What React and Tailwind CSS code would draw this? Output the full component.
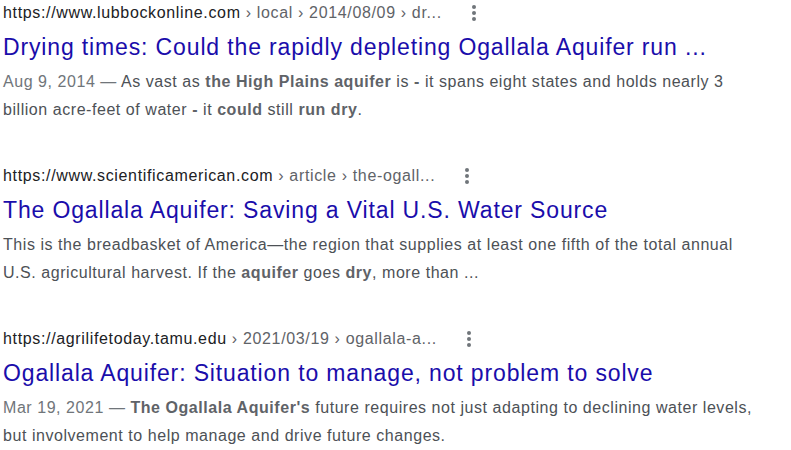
import React from "react";

function Dots() {
  return (
    <svg width="4" height="16" viewBox="0 0 4 16" className="ml-[30px] shrink-0">
      <circle cx="2" cy="2" r="2" fill="#70757a" />
      <circle cx="2" cy="8" r="2" fill="#70757a" />
      <circle cx="2" cy="14" r="2" fill="#70757a" />
    </svg>
  );
}

function Result({ host, crumbs, title, children }) {
  return (
    <div className="flex flex-col">
      <div className="flex items-center h-[23px] text-[16px] leading-[23px] tracking-[0.65px] whitespace-pre">
        <span className="text-[#202124]">{host}</span>
        <span className="text-[#5f6368]">{" " + crumbs}</span>
        <Dots />
      </div>
      <div className="mt-[8px] text-[23px] leading-[30px] tracking-[0.86px] text-[#1a0dab]">{title}</div>
      <div className="mt-[6px] text-[16px] leading-[28px] tracking-[0.55px] text-[#4d5156] w-[760px]">{children}</div>
    </div>
  );
}

export default function App() {
  const B = ({ children }) => <b className="font-bold text-[#5f6368]">{children}</b>;
  return (
    <div
      className="w-[791px] h-[450px] bg-white overflow-hidden pl-[3px] pt-[1px] flex flex-col gap-[40px]"
      style={{ fontFamily: '"Liberation Sans", Arial, sans-serif' }}
    >
      <Result
        host="https://www.lubbockonline.com"
        crumbs="› local › 2014/08/09 › dr..."
        title="Drying times: Could the rapidly depleting Ogallala Aquifer run ..."
      >
        <span className="text-[#70757a]">Aug 9, 2014 — </span>As vast as <B>the High Plains aquifer</B> is <B>-</B> it spans eight states and holds nearly 3 billion acre-feet of water <B>-</B> it <B>could</B> still <B>run dry</B>.
      </Result>
      <Result
        host="https://www.scientificamerican.com"
        crumbs="› article › the-ogall..."
        title="The Ogallala Aquifer: Saving a Vital U.S. Water Source"
      >
        This is the breadbasket of America—the region that supplies at least one fifth of the total annual U.S. agricultural harvest. If the <B>aquifer</B> goes <B>dry</B>, more than ...
      </Result>
      <Result
        host="https://agrilifetoday.tamu.edu"
        crumbs="› 2021/03/19 › ogallala-a..."
        title="Ogallala Aquifer: Situation to manage, not problem to solve"
      >
        <span className="text-[#70757a]">Mar 19, 2021 — </span><B>The Ogallala Aquifer's</B> future requires not just adapting to declining water levels, but involvement to help manage and drive future changes.
      </Result>
    </div>
  );
}
